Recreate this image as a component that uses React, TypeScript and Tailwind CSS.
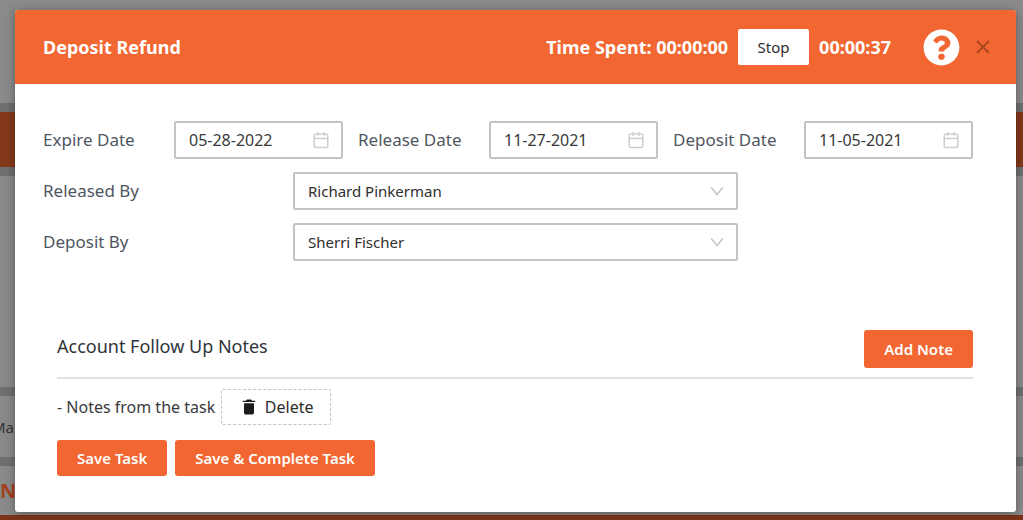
import { Calendar, X } from "lucide-react";
import { FaQuestionCircle } from "react-icons/fa";
import { IoMdTrash } from "react-icons/io";

const labelText = "text-[17px] leading-6 text-[#4f565f]";
const primaryButton =
  "rounded-[3px] bg-[#f26631] px-5 text-[15px] leading-5 font-semibold whitespace-nowrap text-white";

function DateField({ id, label, value }: { id: string; label: string; value: string }) {
  return (
    <div className="flex items-center">
      <label htmlFor={id} className={`w-[131px] shrink-0 whitespace-nowrap ${labelText}`}>
        {label}
      </label>
      <div className="flex h-[38px] min-w-0 flex-1 items-center rounded-[2px] border-2 border-[#c3c3c3] bg-white pr-[11px] pl-[13px]">
        <input
          id={id}
          type="text"
          defaultValue={value}
          className="w-full min-w-0 flex-1 bg-transparent text-base leading-5 text-[#3a3a3a] outline-none"
        />
        <Calendar className="size-[18px] shrink-0 text-[#cecece]" strokeWidth={2} />
      </div>
    </div>
  );
}

function PersonField({ id, label, value }: { id: string; label: string; value: string }) {
  return (
    <div className="flex items-center">
      <label htmlFor={id} className={`w-[250px] shrink-0 ${labelText}`}>
        {label}
      </label>
      <div className="grid w-[445px] items-center">
        <select
          id={id}
          defaultValue={value}
          className="col-start-1 row-start-1 h-[38px] w-full appearance-none rounded-[2px] border-2 border-[#c3c3c3] bg-white pr-9 pl-[13px] text-[15px] leading-5 text-[#2e2e2e]"
        >
          <option>{value}</option>
        </select>
        <svg
          viewBox="0 0 14 10"
          className="pointer-events-none col-start-1 row-start-1 mr-[14px] h-[10px] w-[14px] justify-self-end text-[#c6c6c6]"
          fill="none"
          stroke="currentColor"
          strokeWidth="1.6"
          aria-hidden="true"
        >
          <path d="M1.2 1.4 7 8.4 12.8 1.4" />
        </svg>
      </div>
    </div>
  );
}

function Backdrop() {
  return (
    <div className="col-start-1 row-start-1 flex flex-col gap-[9px] overflow-hidden bg-[#6d6f71]" aria-hidden="true">
      <div className="h-[103px] bg-[#8a8a8a]" />
      <div className="h-[55px] bg-[#84381a]" />
      <div className="h-[211px] bg-[#898989]" />
      <div className="flex h-[61px] items-center bg-[#898989]">
        <span className="-ml-2 text-[15px] leading-5 text-[#333]">Ma</span>
      </div>
      <div className="flex flex-1 items-center border-b-[5px] border-[#7d351a] bg-[#8a8a8a]">
        <span className="text-xl leading-6 font-bold text-[#a3421f]">N</span>
      </div>
    </div>
  );
}

export default function App() {
  return (
    <div className="grid min-h-screen font-['Noto_Sans','Open_Sans',sans-serif]">
      <Backdrop />
      <div
        role="dialog"
        aria-labelledby="dialog-title"
        className="z-10 col-start-1 row-start-1 mt-[10px] mr-[7px] mb-2 ml-[15px] flex flex-col rounded-[3px] bg-white shadow-[0_2px_10px_rgba(0,0,0,0.35)]"
      >
        <header className="flex h-[74px] items-center rounded-t-[3px] bg-[#f26631] pr-[21px] pl-7 text-lg leading-6 font-bold text-white">
          <h1 id="dialog-title" className="flex-1">
            Deposit Refund
          </h1>
          <span>Time Spent: 00:00:00</span>
          <button
            type="button"
            className="mx-[10px] h-9 w-[71px] rounded-[2px] bg-white text-[15px] leading-5 font-normal text-[#2e2e2e]"
          >
            Stop
          </button>
          <span>00:00:37</span>
          <button type="button" aria-label="Help" className="ml-8">
            <FaQuestionCircle className="size-[37px]" />
          </button>
          <button type="button" aria-label="Close" className="ml-[11px]">
            <X className="size-6 text-[#a8461e]" strokeWidth={1.8} strokeLinecap="butt" />
          </button>
        </header>

        <main className="pr-[43px] pl-7">
          <div className="mt-[37px] flex flex-col gap-[13px]">
            <div className="grid grid-cols-3 gap-[15px]">
              <DateField id="expire-date" label="Expire Date" value="05-28-2022" />
              <DateField id="release-date" label="Release Date" value="11-27-2021" />
              <DateField id="deposit-date" label="Deposit Date" value="11-05-2021" />
            </div>
            <PersonField id="released-by" label="Released By" value="Richard Pinkerman" />
            <PersonField id="deposit-by" label="Deposit By" value="Sherri Fischer" />
          </div>

          <section className="mt-[69px] pl-[14px]">
            <div className="flex items-start justify-between border-b-2 border-[#e0e0e0] pb-[9px]">
              <h2 className="mt-1 text-lg leading-6 text-[#30343a]">Account Follow Up Notes</h2>
              <button type="button" className={`h-[38px] ${primaryButton}`}>
                Add Note
              </button>
            </div>
            <div className="mt-[10px] flex items-center gap-[6px] text-base leading-5 text-[#3a3a3a]">
              <p>- Notes from the task</p>
              <button
                type="button"
                className="flex h-9 w-[110px] items-center justify-center gap-[6px] rounded-[2px] border border-dashed border-[#c4c4c4] text-base leading-5 text-[#2e2e2e]"
              >
                <IoMdTrash className="size-5 text-[#1c1c1c]" />
                Delete
              </button>
            </div>
            <div className="mt-[15px] flex gap-2">
              <button type="button" className={`h-9 ${primaryButton}`}>
                Save Task
              </button>
              <button type="button" className={`h-9 ${primaryButton}`}>
                Save &amp; Complete Task
              </button>
            </div>
          </section>
        </main>
      </div>
    </div>
  );
}
